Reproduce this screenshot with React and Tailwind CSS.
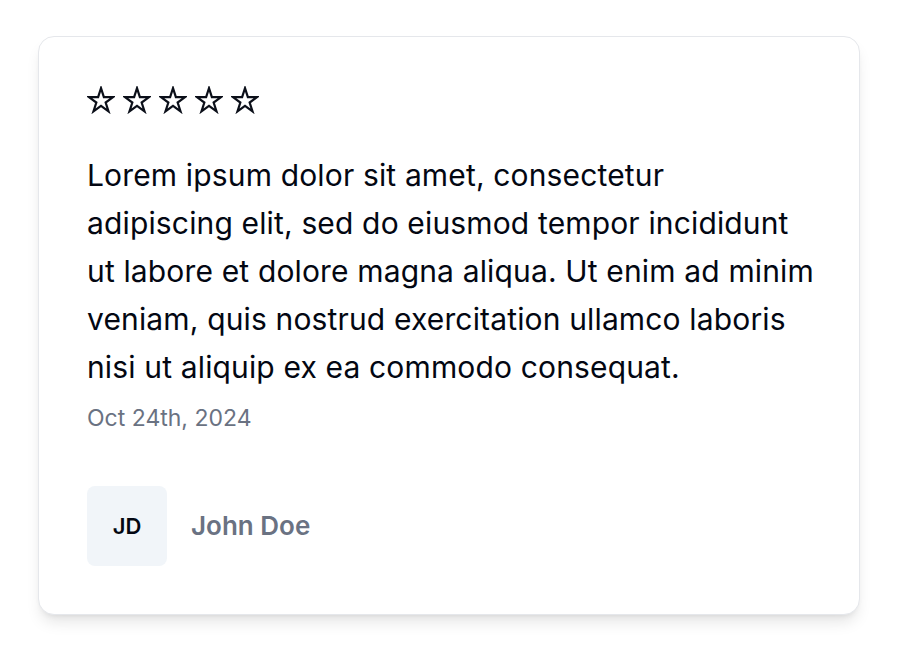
import { useMemo } from "react"

const lines = [
    "Lorem ipsum dolor sit amet, consectetur",
    "adipiscing elit, sed do eiusmod tempor incididunt",
    "ut labore et dolore magna aliqua. Ut enim ad minim",
    "veniam, quis nostrud exercitation ullamco laboris",
    "nisi ut aliquip ex ea commodo consequat.",
]

const Star = () => {
    const points = useMemo(() => {
        const cx = 14, cy = 15, R = 12.8, r = R * 0.382
        const pts = []
        for (let i = 0; i < 10; i++) {
            const rad = i % 2 === 0 ? R : r
            const a = (Math.PI / 180) * (i * 36 - 90)
            pts.push(`${(cx + rad * Math.cos(a)).toFixed(2)},${(cy + rad * Math.sin(a)).toFixed(2)}`)
        }
        return pts.join(" ")
    }, [])

    return (
        <svg width="28" height="28" viewBox="0 0 28 28" fill="none">
            <polygon points={points} stroke="#0b0f19" strokeWidth="2.2" strokeLinejoin="miter" />
        </svg>
    )
}

const App = () => {
    return (
        <div className="min-h-screen bg-white pt-9 pl-[38px]" style={{ fontFamily: "Inter, 'Noto Sans', sans-serif" }}>
            <div className="w-[822px] rounded-2xl border border-gray-200 bg-white p-12 shadow-lg">

                <div className="flex h-[30px] items-center gap-2">
                    {[0, 1, 2, 3, 4].map((i) => <Star key={i} />)}
                </div>

                <p className="mt-9 text-[30px] leading-[48px] tracking-[0.15px] text-gray-950">
                    {lines.map((line, i) => (
                        <span key={i} className="block whitespace-nowrap">{line}</span>
                    ))}
                </p>

                <p className="mt-[11px] text-[23px] leading-8 text-gray-500">
                    Oct 24th, 2024
                </p>

                <div className="mt-[52px] flex items-center gap-6">
                    <div className="flex h-20 w-20 items-center justify-center rounded-lg bg-slate-100 text-[22px] font-semibold text-gray-950">
                        JD
                    </div>
                    <span className="text-[26px] font-semibold leading-8 text-gray-500">John Doe</span>
                </div>

            </div>
        </div>
    )
}

export default App
